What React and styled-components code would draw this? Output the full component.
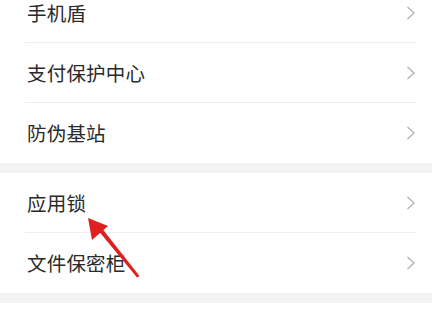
import React from "react";
import styled, { createGlobalStyle } from "styled-components";

const Global = createGlobalStyle`
  html, body { margin: 0; padding: 0; background: #ffffff; }
  body { width: 432px; height: 320px; overflow: hidden; font-family: "Noto Sans CJK SC", "Noto Sans", sans-serif; }
`;

const Screen = styled.div`
  position: relative;
  width: 432px;
  height: 320px;
  overflow: hidden;
  background: #ffffff;
`;

const Scroller = styled.div`
  display: flex;
  flex-direction: column;
`;

const Group = styled.div`
  display: flex;
  flex-direction: column;
  background: #ffffff;
`;

const Gap = styled.div`
  height: 10px;
  background: #f3f3f3;
`;

/* $scrolled: pixels of the row that are scrolled out above the viewport */
const Row = styled.div`
  display: flex;
  align-items: center;
  justify-content: space-between;
  height: ${(p) => 60 - (p.$scrolled || 0)}px;
  padding-bottom: ${(p) => p.$scrolled || 0}px;
  margin-left: 25px;
  margin-right: 16px;
  box-sizing: border-box;
  border-bottom: ${(p) => (p.$last ? "none" : "1px solid #ededed")};
`;

const Label = styled.span`
  font-size: 19.5px;
  line-height: 20px;
  color: #2a2a2a;
  padding-left: 2px;
  letter-spacing: 0.2px;
`;

const Chevron = () => (
  <svg width="10" height="14" viewBox="0 0 10 14">
    <polyline points="1.5,1 8,7 1.5,13" fill="none" stroke="#b4b4b4" strokeWidth="1.4" />
  </svg>
);

const Overlay = styled.svg`
  position: absolute;
  left: 0;
  top: 0;
  pointer-events: none;
`;

const groups = [
  ["手机盾", "支付保护中心", "防伪基站"],
  ["应用锁", "文件保密柜"],
];

export default function App() {
  return (
    <>
      <Global />
      <Screen>
        <Scroller>
          {groups.map((g, gi) => (
            <React.Fragment key={gi}>
              <Group>
                {g.map((t, i) => (
                  <Row
                    key={t}
                    $last={i === g.length - 1}
                    $scrolled={gi === 0 && i === 0 ? 17 : 0}
                  >
                    <Label>{t}</Label>
                    <Chevron />
                  </Row>
                ))}
              </Group>
              <Gap />
            </React.Fragment>
          ))}
        </Scroller>
        <Overlay width="432" height="320" viewBox="0 0 432 320">
          <polygon points="139.5,276 137,277.5 97,229 100.5,226.5" fill="#e0201f" />
          <polygon points="88,218 92,240 108,226" fill="#e0201f" />
        </Overlay>
      </Screen>
    </>
  );
}
